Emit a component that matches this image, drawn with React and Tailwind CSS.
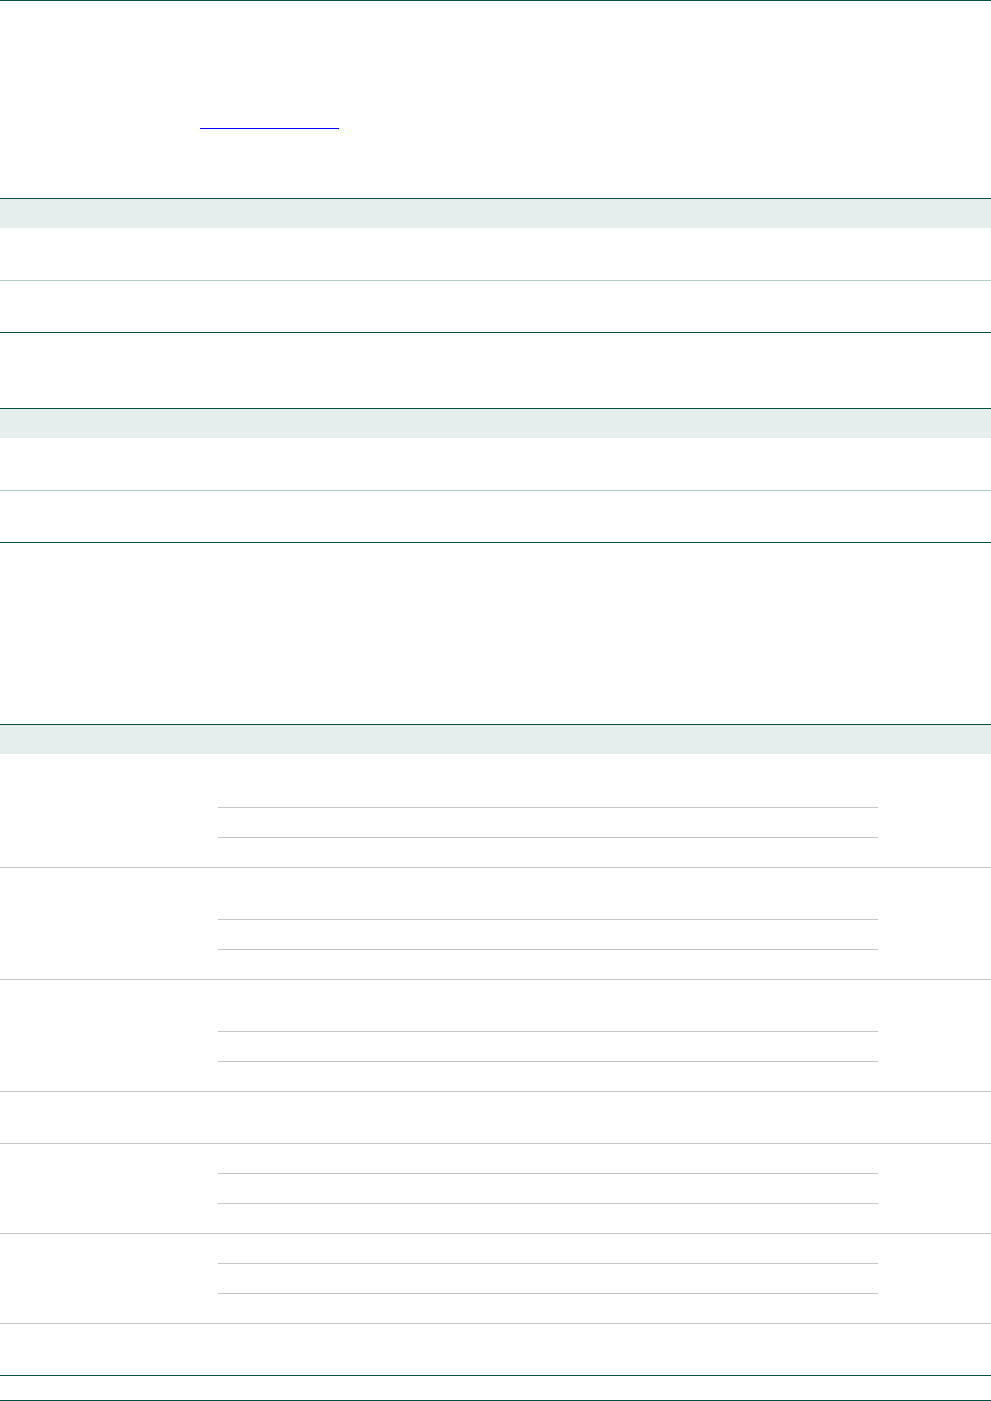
import React from "react";

function SimpleTable() {
  return (
    <div className="border-t border-[#00513f]">
      <div className="h-[29px] bg-[#e6eded]" />
      <div className="h-[53px] border-b border-[#b3cfc7]" />
      <div className="h-[52px] border-b border-[#00513f]" />
    </div>
  );
}

function SubRow({ h, last }) {
  return (
    <div
      className={last ? "" : "border-b border-[#c3c8c6]"}
      style={{ height: h }}
    />
  );
}

function GroupRow({ subs, final }) {
  return (
    <div className={final ? "flex border-b border-[#00513f]" : "flex border-b border-[#c3c8c6]"}>
      <div className="w-[218px] shrink-0" />
      <div className="w-[660px] shrink-0 flex flex-col">
        {subs.map((h, i) => (
          <SubRow key={i} h={h} last={i === subs.length - 1} />
        ))}
      </div>
      <div className="flex-1" />
    </div>
  );
}

export default function App() {
  return (
    <div className="w-[991px] h-[1401px] bg-white overflow-hidden" style={{ fontFamily: '"Liberation Sans", Arial, sans-serif' }}>
      <div className="border-t border-[#00513f]" />
      <div className="h-[127px]" />
      <div className="ml-[200px] w-[139px] border-b border-[#0000ff]" />
      <div className="h-[69px]" />
      <SimpleTable />
      <div className="h-[75px]" />
      <SimpleTable />
      <div className="h-[181px]" />
      <div className="border-t border-[#00513f]">
        <div className="h-[29px] bg-[#e6eded]" />
        <GroupRow subs={[54, 30, 29]} />
        <GroupRow subs={[52, 30, 29]} />
        <GroupRow subs={[52, 30, 29]} />
        <GroupRow subs={[51]} />
        <GroupRow subs={[30, 30, 29]} />
        <GroupRow subs={[30, 30, 29]} />
        <GroupRow subs={[51]} final />
      </div>
      <div className="h-[25px] border-b border-[#00513f]" />
    </div>
  );
}
